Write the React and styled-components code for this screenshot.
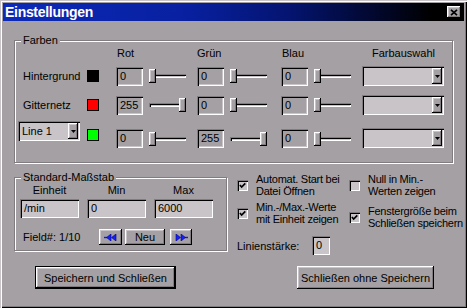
import React from 'react'
import styled, { createGlobalStyle, css } from 'styled-components'

const FACE = '#a4a0a4'
const LIGHT = '#c8c4c8'
const SHADOW = '#807c80'

const GlobalStyle = createGlobalStyle`
  html, body {
    margin: 0;
    padding: 0;
    background: ${FACE};
  }
  body {
    font-family: "Liberation Sans", Arial, sans-serif;
    font-size: 11px;
    color: #000;
  }
`

const sunken = css`
  box-shadow: inset 1px 1px ${SHADOW}, inset 2px 2px #000,
    inset -1px -1px #fff, inset -2px -2px ${LIGHT};
`

const raised = css`
  box-shadow: inset -1px -1px #000, inset 1px 1px #fff,
    inset -2px -2px ${SHADOW}, inset 2px 2px ${LIGHT};
`

const Window = styled.div`
  width: 467px;
  height: 308px;
  box-sizing: border-box;
  padding: 3px;
  overflow: hidden;
  background: ${FACE};
  box-shadow: inset 1px 1px ${LIGHT}, inset 2px 2px #fff,
    inset -1px -1px #000, inset -2px -2px ${SHADOW};
  display: flex;
  flex-direction: column;
`

const TitleBar = styled.div`
  height: 18px;
  display: flex;
  align-items: center;
  justify-content: space-between;
  padding: 0 3px 0 2px;
  background: linear-gradient(to right, #0c2ab8 0%, #0820a0 40%, #041470 62%, #020830 80%, #000 93%);
`

const Title = styled.span`
  color: #fff;
  font-weight: bold;
  font-size: 14px;
  letter-spacing: -0.3px;
  line-height: 18px;
`

const CloseButton = styled.div`
  width: 14px;
  height: 12px;
  background: ${FACE};
  ${raised};
  display: flex;
  align-items: center;
  justify-content: center;
`

const Body = styled.div`
  padding: 13px 11px 0 11px;
  display: flex;
  flex-direction: column;
`

const Group = styled.fieldset`
  flex: none;
  margin: 0;
  min-width: 0;
  width: ${p => p.$w}px;
  box-sizing: border-box;
  padding: 0 0 ${p => p.$pb}px ${p => p.$pl}px;
  border: 1px solid ${SHADOW};
  box-shadow: inset 1px 1px #fff, 1px 1px #fff;
`

const Legend = styled.legend`
  margin-left: ${p => p.$ml}px;
  padding: 0 2px;
  line-height: 13px;
  background: ${FACE};
`

const ColorGrid = styled.div`
  display: grid;
  grid-template-columns: 69px 29px 81px 84px 81px 82px;
  align-items: ${p => p.$align || 'center'};
  height: ${p => p.$h}px;
  margin-top: ${p => p.$mt || 0}px;
`

const HeadCell = styled.div`
  line-height: 12px;
  padding-left: ${p => p.$indent || 0}px;
  grid-column: ${p => p.$col};
`

const RowLabel = styled.div`
  padding-left: 5px;
  line-height: 12px;
`

const Swatch = styled.div`
  width: 12px;
  height: 12px;
  box-sizing: border-box;
  border: 1px solid #000;
  background: ${p => p.$color};
  align-self: center;
`

const Channel = styled.div`
  display: flex;
  align-items: center;
  gap: 6px;
`

const ColorField = styled.div`
  width: 27px;
  height: 19px;
  box-sizing: border-box;
  padding-left: 4px;
  line-height: 19px;
  background: ${FACE};
  ${sunken};
`

const Slider = styled.div`
  position: relative;
  width: 37px;
  height: 14px;
  display: flex;
  align-items: center;
`

const Track = styled.div`
  width: 100%;
  height: 4px;
  ${sunken};
`

const Thumb = styled.div`
  position: absolute;
  top: 0;
  left: ${p => p.$pos}px;
  width: 7px;
  height: 14px;
  background: ${FACE};
  ${raised};
`

const Combo = styled.div`
  width: ${p => p.$w}px;
  height: 20px;
  box-sizing: border-box;
  padding: 2px;
  background: ${LIGHT};
  ${sunken};
  display: flex;
  align-items: center;
  justify-content: space-between;
  align-self: ${p => p.$self || 'auto'};
`

const ComboText = styled.span`
  padding-left: 2px;
  line-height: 16px;
`

const DropButton = styled.div`
  width: 10px;
  height: 16px;
  background: ${FACE};
  ${raised};
  display: flex;
  align-items: center;
  justify-content: center;
`

const MidRow = styled.div`
  display: flex;
  align-items: flex-start;
  margin-top: 8px;
`

const ScaleGrid = styled.div`
  display: grid;
  grid-template-columns: repeat(3, 59px);
  column-gap: 8px;
`

const ScaleHead = styled.div`
  text-align: center;
  line-height: 12px;
`

const ScaleField = styled.div`
  height: 19px;
  margin-top: 3px;
  box-sizing: border-box;
  padding-left: 4px;
  line-height: 19px;
  background: ${LIGHT};
  ${sunken};
`

const NavRow = styled.div`
  display: flex;
  align-items: center;
  height: 16px;
  margin-top: 11px;
`

const FieldLabel = styled.span`
  width: 79px;
  padding-left: 3px;
  box-sizing: border-box;
`

const NavButton = styled.div`
  width: ${p => p.$w}px;
  height: 16px;
  margin-left: ${p => p.$ml || 0}px;
  background: ${FACE};
  ${raised};
  display: flex;
  align-items: center;
  justify-content: center;
  line-height: 16px;
`

const Options = styled.div`
  flex: none;
  margin-left: 10px;
  padding-top: 2px;
  display: flex;
  flex-direction: column;
`

const CheckGrid = styled.div`
  display: grid;
  grid-template-columns: 112px auto;
  grid-template-rows: 24px 28px;
  row-gap: 4px;
`

const CheckItem = styled.div`
  display: flex;
  align-items: center;
  height: 24px;
  align-self: ${p => (p.$low ? 'end' : 'start')};
`

const CheckBox = styled.div`
  flex: none;
  width: 11px;
  height: 11px;
  margin-right: 8px;
  background: ${LIGHT};
  ${sunken};
  display: flex;
  align-items: center;
  justify-content: center;
`

const CheckText = styled.span`
  line-height: 12px;
  letter-spacing: -0.25px;
  white-space: nowrap;
`

const WidthRow = styled.div`
  display: flex;
  align-items: center;
  margin-top: 7px;
`

const WidthLabel = styled.span`
  width: 75px;
`

const SmallField = styled.div`
  width: 18px;
  height: 19px;
  box-sizing: border-box;
  padding-left: 4px;
  line-height: 19px;
  background: ${LIGHT};
  ${sunken};
`

const ButtonRow = styled.div`
  display: flex;
  justify-content: space-between;
  padding: 0 19px 0 21px;
  margin-top: 11px;
`

const PushButton = styled.div`
  width: ${p => p.$w}px;
  height: 23px;
  box-sizing: border-box;
  background: ${FACE};
  ${raised};
  border: ${p => (p.$default ? '1px solid #000' : 'none')};
  display: flex;
  align-items: center;
  justify-content: center;
`

const Arrow = () => (
  <svg width="5" height="3" viewBox="0 0 5 3">
    <polygon points="0,0 5,0 2.5,3" fill="#000" />
  </svg>
)

const CloseIcon = () => (
  <svg width="8" height="7" viewBox="0 0 8 7">
    <path d="M1 0.8 L7 6.2 M7 0.8 L1 6.2" stroke="#000" strokeWidth="1.7" />
  </svg>
)

const Check = () => (
  <svg width="7" height="7" viewBox="0 0 8 7">
    <polyline points="1,3 3,5.2 7.2,1" fill="none" stroke="#000" strokeWidth="1.9" />
  </svg>
)

const Skip = ({ flip }) => (
  <svg width="13" height="7" viewBox="0 0 13 7" style={flip ? { transform: 'scaleX(-1)' } : undefined}>
    <rect x="0" y="2.8" width="3" height="1.4" fill="#1018e8" />
    <polygon points="2.5,3.5 7,0 7,7" fill="#1420ff" stroke="#000080" strokeWidth="0.6" />
    <polygon points="7.5,3.5 12,0 12,7" fill="#1420ff" stroke="#000080" strokeWidth="0.6" />
  </svg>
)

const ColorChannel = ({ value }) => (
  <Channel>
    <ColorField>{value}</ColorField>
    <Slider>
      <Track />
      <Thumb $pos={Math.round((value / 255) * 30)} />
    </Slider>
  </Channel>
)

const ColorPicker = () => (
  <Combo $w={82}>
    <span />
    <DropButton><Arrow /></DropButton>
  </Combo>
)

const rows = [
  { label: 'Hintergrund', color: '#000', values: [0, 0, 0], mt: 7, h: 20 },
  { label: 'Gitternetz', color: '#ff0000', values: [255, 0, 0], mt: 9, h: 20 },
  { combo: 'Line 1', color: '#00ff00', values: [0, 255, 0], mt: 6, h: 27, align: 'end' },
]

const Option = ({ checked, low, children }) => (
  <CheckItem $low={low}>
    <CheckBox>{checked && <Check />}</CheckBox>
    <CheckText>{children}</CheckText>
  </CheckItem>
)

export default function App() {
  return (
    <>
      <GlobalStyle />
      <Window>
        <TitleBar>
          <Title>Einstellungen</Title>
          <CloseButton><CloseIcon /></CloseButton>
        </TitleBar>

        <Body>
          <Group $w={439} $pl={3} $pb={14}>
            <Legend $ml={3}>Farben</Legend>
            <ColorGrid $h={12}>
              <HeadCell $col={3} $indent={1}>Rot</HeadCell>
              <HeadCell $col={4}>Grün</HeadCell>
              <HeadCell $col={5} $indent={1}>Blau</HeadCell>
              <HeadCell $col={6} $indent={10}>Farbauswahl</HeadCell>
            </ColorGrid>

            {rows.map((row, i) => (
              <ColorGrid key={i} $mt={row.mt} $h={row.h} $align={row.align}>
                {row.combo ? (
                  <Combo $w={62} $self="start">
                    <ComboText>{row.combo}</ComboText>
                    <DropButton><Arrow /></DropButton>
                  </Combo>
                ) : (
                  <RowLabel>{row.label}</RowLabel>
                )}
                <Swatch $color={row.color} />
                {row.values.map((v, j) => <ColorChannel key={j} value={v} />)}
                <ColorPicker />
              </ColorGrid>
            ))}
          </Group>

          <MidRow>
            <Group $w={213} $pl={5} $pb={5}>
              <Legend $ml={1}>Standard-Maßstab</Legend>
              <ScaleGrid>
                <ScaleHead>Einheit</ScaleHead>
                <ScaleHead>Min</ScaleHead>
                <ScaleHead>Max</ScaleHead>
                <ScaleField>/min</ScaleField>
                <ScaleField>0</ScaleField>
                <ScaleField>6000</ScaleField>
              </ScaleGrid>
              <NavRow>
                <FieldLabel>Field#: 1/10</FieldLabel>
                <NavButton $w={23}><Skip /></NavButton>
                <NavButton $w={40} $ml={3}>Neu</NavButton>
                <NavButton $w={22} $ml={5}><Skip flip /></NavButton>
              </NavRow>
            </Group>

            <Options>
              <CheckGrid>
                <Option checked>Automat. Start bei<br />Datei Öffnen</Option>
                <Option>Null in Min.-<br />Werten zeigen</Option>
                <Option checked>Min.-/Max.-Werte<br />mit Einheit zeigen</Option>
                <Option checked low>Fenstergröße beim<br />Schließen speichern</Option>
              </CheckGrid>
              <WidthRow>
                <WidthLabel>Linienstärke:</WidthLabel>
                <SmallField>0</SmallField>
              </WidthRow>
            </Options>
          </MidRow>

          <ButtonRow>
            <PushButton $w={141} $default>Speichern und Schließen</PushButton>
            <PushButton $w={137}>Schließen ohne Speichern</PushButton>
          </ButtonRow>
        </Body>
      </Window>
    </>
  )
}
